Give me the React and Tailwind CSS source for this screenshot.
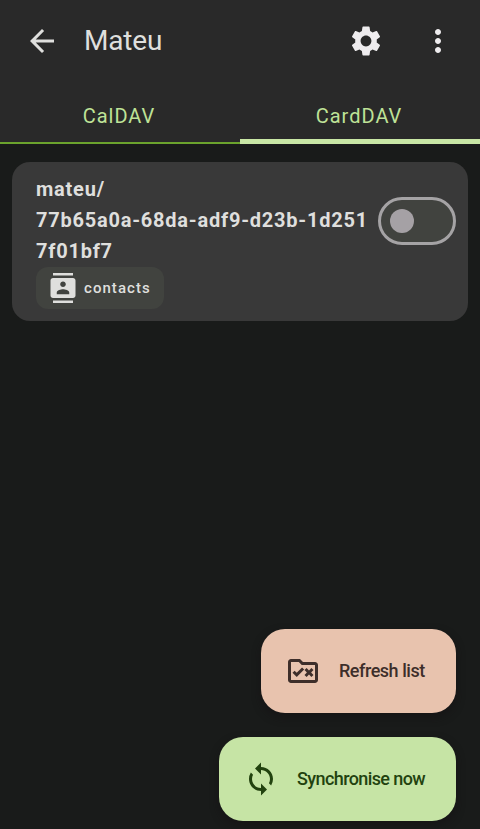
import React from "react";
import {
  MdArrowBack,
  MdSettings,
  MdMoreVert,
  MdContacts,
  MdOutlineRuleFolder,
  MdSync,
} from "react-icons/md";

function TopBar() {
  return (
    <div className="flex h-[82px] items-center pl-6 pr-6 text-[#dfdfdd]">
      <MdArrowBack size={36} />
      <h1 className="ml-6 flex-1 text-[28px] leading-9 tracking-[-0.2px]">Mateu</h1>
      <MdSettings size={36} className="text-[#eeecee]" />
      <MdMoreVert size={36} className="ml-9 text-[#eeecee]" />
    </div>
  );
}

function Tab({ label, active }) {
  return (
    <div
      className={
        active
          ? "flex flex-1 flex-col justify-between border-b-[5px] border-[#c8e6a5]"
          : "flex flex-1 flex-col justify-between border-b-2 border-[#6ba32d]"
      }
    >
      <span className="mt-5 pr-[2px] text-center text-[20px] leading-7 tracking-[1px]">{label}</span>
    </div>
  );
}

function CollectionCard() {
  return (
    <div className="mx-3 mt-[18px] flex h-[159px] rounded-[18px] bg-[#393939] pl-6 pr-3 text-[#dfdfdd]">
      <div className="flex flex-1 flex-col items-start pt-3">
        <div className="text-[20px] font-bold leading-[31px] tracking-[0.77px] whitespace-nowrap">
          mateu/
          <br />
          77b65a0a-68da-adf9-d23b-1d251
          <br />
          7f01bf7
        </div>
        <div className="flex h-[42px] w-32 items-center gap-1.5 rounded-xl bg-[#41433f] pl-3">
          <MdContacts size={30} />
          <span className="text-[15px] font-medium tracking-[1.05px]">contacts</span>
        </div>
      </div>
      <div className="mt-[35px] flex h-12 w-[78px] shrink-0 items-center rounded-full border-[3px] border-[#a5a3a5] bg-[#41433f] pl-[9px]">
        <div className="size-6 rounded-full bg-[#a5a1a5]" />
      </div>
    </div>
  );
}

export default function App() {
  return (
    <div className="flex h-[829px] w-[480px] flex-col overflow-hidden bg-[#191b1a] font-[Roboto,sans-serif]">
      <header className="bg-[#292929]">
        <TopBar />
        <div className="flex h-[62px] text-[#bee297]">
          <Tab label="CalDAV" />
          <Tab label="CardDAV" active />
        </div>
      </header>
      <CollectionCard />
      <div className="mt-auto mb-2 mr-6 flex flex-col items-end gap-6">
        <button className="flex h-[84px] w-[195px] items-center rounded-3xl bg-[#e8c3ae] pl-6 text-[#3d2e2a] shadow-[0_4px_8px_rgba(20,16,18,0.6)]">
          <MdOutlineRuleFolder size={36} />
          <span className="mb-[2px] ml-[18px] text-[18px] font-medium tracking-[-0.47px] whitespace-nowrap">Refresh list</span>
        </button>
        <button className="flex h-[84px] w-[237px] items-center rounded-3xl bg-[#c6e4a5] pl-6 text-[#22420f] shadow-[0_4px_8px_rgba(20,16,18,0.6)]">
          <MdSync size={36} />
          <span className="mb-[2px] ml-[18px] text-[18px] font-medium tracking-[-0.6px] whitespace-nowrap">Synchronise now</span>
        </button>
      </div>
    </div>
  );
}
